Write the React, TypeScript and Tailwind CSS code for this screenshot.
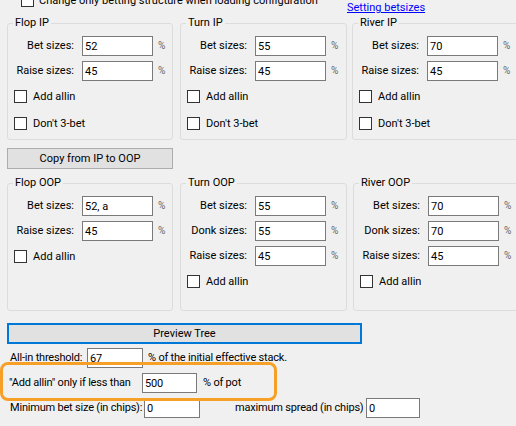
import React from "react";

function Cb() {
  return <span className="block w-[13px] h-[13px] border border-[#333333] bg-white shrink-0" />;
}

function Field({ value, cls }: { value: string; cls: string }) {
  return (
    <div className={`h-[20px] border border-[#7a7a7a] bg-white pl-[2px] flex items-center shrink-0 leading-none ${cls}`}>
      {value}
    </div>
  );
}

function SizeRow({ label, value }: { label: string; value: string }) {
  return (
    <div className="flex items-center h-[20px]">
      <span className="w-[66px] text-right whitespace-nowrap">{label}</span>
      <Field value={value} cls="ml-[8px] w-[71px]" />
      <span className="ml-[5px] text-[#666666] text-[10px]">%</span>
    </div>
  );
}

function CheckRow({ label }: { label: string }) {
  return (
    <div className="flex items-center h-[13px] pl-[6px] gap-[6px]">
      <Cb />
      <span className="whitespace-nowrap">{label}</span>
    </div>
  );
}

function GroupBox({
  title,
  cls,
  sizes,
  checks,
}: {
  title: string;
  cls: string;
  sizes: [string, string][];
  checks: string[];
}) {
  return (
    <div className={`relative shrink-0 border border-[#dcdcdc] rounded-[3px] ${cls}`}>
      <span className="absolute -top-[8px] left-[5px] px-[2px] bg-[#f0f0f0] leading-[14px] whitespace-nowrap">
        {title}
      </span>
      <div className="pt-[12px] flex flex-col gap-[5px]">
        {sizes.map(([l, v]) => (
          <SizeRow key={l} label={l} value={v} />
        ))}
      </div>
      <div className="mt-[9px] flex flex-col gap-[14px]">
        {checks.map((c) => (
          <CheckRow key={c} label={c} />
        ))}
      </div>
    </div>
  );
}

export default function App() {
  return (
    <div className="relative w-[516px] h-[426px] overflow-hidden bg-[#f0f0f0] text-[#000000] text-[11px] leading-[14px] font-['Roboto','Noto_Sans',sans-serif]">
      {/* top row */}
      <div className="flex h-[23px]">
        <div className="ml-[21px] -mt-[6px] w-[326px] h-[13px] flex items-center gap-[5px]">
          <Cb />
          <span className="whitespace-nowrap">Change only betting structure when loading configuration</span>
        </div>
        <a className="mt-[1px] text-[#0000ff] underline whitespace-nowrap h-[14px]">Setting betsizes</a>
      </div>

      {/* IP row */}
      <div className="flex">
        <GroupBox
          title="Flop IP"
          cls="ml-[7px] w-[166px] h-[117px]"
          sizes={[
            ["Bet sizes:", "52"],
            ["Raise sizes:", "45"],
          ]}
          checks={["Add allin", "Don't 3-bet"]}
        />
        <GroupBox
          title="Turn IP"
          cls="ml-[7px] w-[167px] h-[117px]"
          sizes={[
            ["Bet sizes:", "55"],
            ["Raise sizes:", "45"],
          ]}
          checks={["Add allin", "Don't 3-bet"]}
        />
        <GroupBox
          title="River IP"
          cls="ml-[5px] w-[175px] h-[117px]"
          sizes={[
            ["Bet sizes:", "70"],
            ["Raise sizes:", "45"],
          ]}
          checks={["Add allin", "Don't 3-bet"]}
        />
      </div>

      {/* Copy button */}
      <button className="block ml-[7px] mt-[8px] w-[166px] h-[21px] border border-[#adadad] bg-[#e1e1e1] text-center">
        Copy from IP to OOP
      </button>

      {/* OOP row */}
      <div className="flex mt-[14px]">
        <GroupBox
          title="Flop OOP"
          cls="ml-[7px] w-[166px] h-[128px]"
          sizes={[
            ["Bet sizes:", "52, a"],
            ["Raise sizes:", "45"],
          ]}
          checks={["Add allin"]}
        />
        <GroupBox
          title="Turn OOP"
          cls="ml-[7px] w-[167px] h-[128px]"
          sizes={[
            ["Bet sizes:", "55"],
            ["Donk sizes:", "55"],
            ["Raise sizes:", "45"],
          ]}
          checks={["Add allin"]}
        />
        <GroupBox
          title="River OOP"
          cls="ml-[6px] w-[175px] h-[128px]"
          sizes={[
            ["Bet sizes:", "70"],
            ["Donk sizes:", "70"],
            ["Raise sizes:", "45"],
          ]}
          checks={["Add allin"]}
        />
      </div>

      {/* Preview Tree */}
      <button className="block ml-[7px] mt-[12px] w-[355px] h-[21px] border-2 border-[#0078d7] bg-[#e1e1e1] text-center">
        Preview Tree
      </button>

      {/* All-in threshold */}
      <div className="flex items-center mt-[4px] h-[20px] tracking-[-0.2px]">
        <span className="ml-[10px] w-[77px] whitespace-nowrap">All-in threshold:</span>
        <Field value="67" cls="w-[56px]" />
        <span className="ml-[5px] whitespace-nowrap">% of the initial effective stack.</span>
      </div>

      <div className="flex items-center mt-[5px] h-[20px] tracking-[-0.2px]">
        <span className="ml-[9px] w-[133px] whitespace-nowrap">"Add allin" only if less than</span>
        <Field value="500" cls="w-[55px]" />
        <span className="ml-[6px] whitespace-nowrap">% of pot</span>
      </div>

      <div className="flex items-center mt-[5px] h-[20px] tracking-[-0.2px]">
        <span className="ml-[10px] w-[134px] whitespace-nowrap">Minimum bet size (in chips):</span>
        <Field value="0" cls="w-[56px]" />
        <span className="ml-[35px] w-[131px] whitespace-nowrap">maximum spread (in chips)</span>
        <Field value="0" cls="w-[54px]" />
      </div>

      {/* orange highlight */}
      <div className="absolute left-0 top-[362px] w-[277px] h-[39px] border-[3px] border-[#f6a027] rounded-[8px] pointer-events-none" />
    </div>
  );
}
